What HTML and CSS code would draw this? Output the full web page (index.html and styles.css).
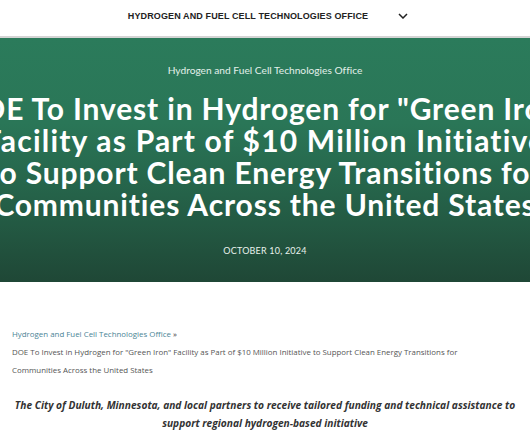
FILE: index.html
```html
<!DOCTYPE html>
<html>
<head>
<meta charset="utf-8">
<link rel="stylesheet" href="styles.css">
</head>
<body>
<header class="topbar">
  <span class="office">HYDROGEN AND FUEL CELL TECHNOLOGIES OFFICE</span>
  <svg class="chev" width="10" height="6" viewBox="0 0 10 6"><path d="M1 1 L5 5 L9 1" fill="none" stroke="#222" stroke-width="1.5"/></svg>
</header>
<section class="hero">
  <div class="kicker">Hydrogen and Fuel Cell Technologies Office</div>
  <h1 class="title">
    <span>DOE To Invest in Hydrogen for "Green Iron"</span>
    <span class="wide">Facility as Part of $10 Million Initiative</span>
    <span>to Support Clean Energy Transitions for</span>
    <span>Communities Across the United States</span>
  </h1>
  <div class="date">OCTOBER 10, 2024</div>
</section>
<nav class="crumbs">
  <div class="crumb1"><a class="link">Hydrogen and Fuel Cell Technologies Office</a> <span class="sep">»</span></div>
  <div class="crumb2">DOE To Invest in Hydrogen for "Green Iron" Facility as Part of $10 Million Initiative to Support Clean Energy Transitions for Communities Across the United States</div>
</nav>
<p class="lede">The City of Duluth, Minnesota, and local partners to receive tailored funding and technical assistance to support regional hydrogen-based initiative</p>
</body>
</html>
```
FILE: styles.css
```css
html, body { margin: 0; padding: 0; background: #fff; overflow: hidden; }
body { width: 530px; font-family: "Lato", "Liberation Sans", sans-serif; font-variant-ligatures: none; }
.topbar {
  display: flex;
  align-items: center;
  justify-content: center;
  gap: 30px;
  border-bottom: 2px solid #d4d4d4;
  padding-left: 6px;
  padding-bottom: 4px;
  box-sizing: border-box;
  height: 38px;
}
.office {
  font-family: "Liberation Sans", sans-serif;
  font-weight: 700;
  font-size: 9px;
  letter-spacing: 0.12px;
  color: #222;
}
.chev { display: block; }
.hero {
  height: 244px;
  background: linear-gradient(180deg, #2b7b5b 0%, #2a7657 35%, #245e46 70%, #1f4736 100%);
  color: #fff;
  text-align: center;
  overflow: hidden;
  display: flex;
  flex-direction: column;
  align-items: center;
}
.kicker {
  margin-top: 25px;
  font-size: 10.2px;
  color: #e3f0ea;
  line-height: 14px;
}
.title {
  margin: 15px 0 0;
  font-size: 30px;
  line-height: 32px;
  font-weight: 700;
  letter-spacing: 0.85px;
  display: flex;
  flex-direction: column;
  align-items: center;
  width: 530px;
}
.title span { white-space: nowrap; }
.title .wide { letter-spacing: 1.2px; }
.date {
  margin-top: 25px;
  font-size: 9px;
  letter-spacing: 0.2px;
  color: #e8f1ec;
}
.crumbs {
  padding: 43px 12px 0;
  font-family: "Open Sans", sans-serif;
  font-size: 7.9px;
  color: #555;
}
.crumb1 { line-height: 18px; }
.link { color: #4b8596; }
.sep { color: #333; }
.crumb2 { line-height: 18px; max-width: 470px; }
.lede {
  margin: 17px 6px 0;
  text-align: center;
  font-family: "Open Sans", sans-serif;
  font-style: italic;
  font-weight: 700;
  font-size: 10.2px;
  line-height: 18px;
  color: #333;
}
```
